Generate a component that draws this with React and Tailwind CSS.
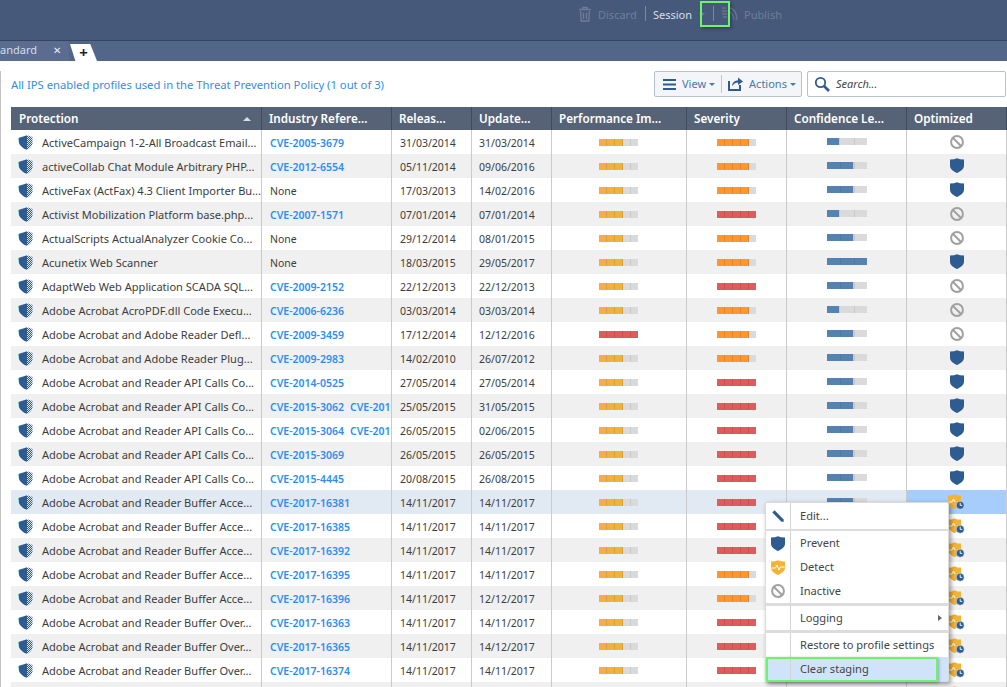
import React from "react";

const rows = [
  ["ActiveCampaign 1-2-All Broadcast Email...", ["CVE-2005-3679"], "31/03/2014", "31/03/2014", 3, 4, 1, "block"],
  ["activeCollab Chat Module Arbitrary PHP...", ["CVE-2012-6554"], "05/11/2014", "09/06/2016", 3, 4, 2, "shield"],
  ["ActiveFax (ActFax) 4.3 Client Importer Bu...", [], "17/03/2013", "14/02/2016", 3, 4, 2, "shield"],
  ["Activist Mobilization Platform base.php...", ["CVE-2007-1571"], "07/01/2014", "07/01/2014", 3, 5, 1, "block"],
  ["ActualScripts ActualAnalyzer Cookie Co...", [], "29/12/2014", "08/01/2015", 3, 4, 2, "block"],
  ["Acunetix Web Scanner", [], "18/03/2015", "29/05/2017", 3, 4, 3, "shield"],
  ["AdaptWeb Web Application SCADA SQL...", ["CVE-2009-2152"], "22/12/2013", "22/12/2013", 3, 5, 2, "block"],
  ["Adobe Acrobat AcroPDF.dll Code Execu...", ["CVE-2006-6236"], "03/03/2014", "03/03/2014", 3, 4, 1, "block"],
  ["Adobe Acrobat and Adobe Reader Defl...", ["CVE-2009-3459"], "17/12/2014", "12/12/2016", 5, 4, 2, "block"],
  ["Adobe Acrobat and Adobe Reader Plug...", ["CVE-2009-2983"], "14/02/2010", "26/07/2012", 3, 4, 2, "shield"],
  ["Adobe Acrobat and Reader API Calls Co...", ["CVE-2014-0525"], "27/05/2014", "27/05/2014", 3, 5, 2, "shield"],
  ["Adobe Acrobat and Reader API Calls Co...", ["CVE-2015-3062", "CVE-2015-3063"], "25/05/2015", "31/05/2015", 3, 5, 2, "shield"],
  ["Adobe Acrobat and Reader API Calls Co...", ["CVE-2015-3064", "CVE-2015-3065"], "26/05/2015", "02/06/2015", 3, 5, 2, "shield"],
  ["Adobe Acrobat and Reader API Calls Co...", ["CVE-2015-3069"], "26/05/2015", "26/05/2015", 3, 5, 2, "shield"],
  ["Adobe Acrobat and Reader API Calls Co...", ["CVE-2015-4445"], "20/08/2015", "26/08/2015", 3, 5, 2, "shield"],
  ["Adobe Acrobat and Reader Buffer Acce...", ["CVE-2017-16381"], "14/11/2017", "14/11/2017", 3, 5, 2, "detect"],
  ["Adobe Acrobat and Reader Buffer Acce...", ["CVE-2017-16385"], "14/11/2017", "14/11/2017", 3, 5, 2, "detect"],
  ["Adobe Acrobat and Reader Buffer Acce...", ["CVE-2017-16392"], "14/11/2017", "14/11/2017", 3, 5, 2, "detect"],
  ["Adobe Acrobat and Reader Buffer Acce...", ["CVE-2017-16395"], "14/11/2017", "14/11/2017", 3, 4, 2, "detect"],
  ["Adobe Acrobat and Reader Buffer Acce...", ["CVE-2017-16396"], "14/11/2017", "12/12/2017", 3, 4, 2, "detect"],
  ["Adobe Acrobat and Reader Buffer Over...", ["CVE-2017-16363"], "14/11/2017", "14/11/2017", 3, 5, 2, "detect"],
  ["Adobe Acrobat and Reader Buffer Over...", ["CVE-2017-16365"], "14/11/2017", "14/12/2017", 3, 5, 2, "detect"],
  ["Adobe Acrobat and Reader Buffer Over...", ["CVE-2017-16374"], "14/11/2017", "14/11/2017", 3, 5, 2, "detect"],
  ["Adobe Acrobat and Reader Buffer Over...", ["CVE-2017-16375"], "14/11/2017", "14/11/2017", 3, 5, 2, "detect"],
];

const GRID = "grid grid-cols-[251px_130px_80px_80px_135px_100px_120px_100px]";
const SHIELD = "M7 0.2 L10 1.2 L14 1.6 L14 8 C14 11 10 13.8 7 15 C4 13.8 0 11 0 8 L0 1.6 L4 1.2 Z";

function ProtIcon() {
  return (
    <svg width="15" height="15" viewBox="0 0 15 15" className="shrink-0">
      <defs>
        <pattern id="dith" width="2" height="2" patternUnits="userSpaceOnUse">
          <rect width="1" height="1" fill="#2f5c90" />
          <rect x="1" y="1" width="1" height="1" fill="#2f5c90" />
          <rect x="1" width="1" height="1" fill="#dce5ef" />
          <rect y="1" width="1" height="1" fill="#dce5ef" />
        </pattern>
      </defs>
      <path d="M0.5 3 L9 0.3 L9 14.8 C5 14 1.5 10 1 8 Z" fill="#2f5c90" />
      <path d="M9 0.3 L14.5 2 L14.5 8 C14.5 10.5 12 13.5 9 14.8 Z" fill="url(#dith)" />
    </svg>
  );
}

function ShieldIcon() {
  return (
    <svg width="14" height="15" viewBox="0 0 14 15">
      <path d={SHIELD} fill="#2f5c90" />
    </svg>
  );
}

function BlockIcon() {
  return (
    <svg width="14" height="14" viewBox="0 0 14 14">
      <circle cx="7" cy="7" r="5.9" fill="none" stroke="#a0a0a0" strokeWidth="2" />
      <path d="M3 3 L11 11" stroke="#a0a0a0" strokeWidth="2" />
    </svg>
  );
}

function DetectShield() {
  return (
    <svg width="14" height="15" viewBox="0 0 14 15">
      <path d={SHIELD} fill="#f4b333" />
      <path d="M0.5 8 L4.5 8 L6 5 L8 10 L9.5 7 L13.5 7" fill="none" stroke="#ffffff" strokeWidth="1" />
    </svg>
  );
}

function DetectClock() {
  return (
    <svg width="17" height="16" viewBox="0 0 17 16">
      <path d="M6.5 0.3 L9.5 1.4 L13 1.6 L13 8 C13 11 9.5 13.6 6.5 15 C3.5 13.6 0 11 0 8 L0 1.6 L3.5 1.4 Z" fill="#f4b333" />
      <path d="M0.5 8 L4 8 L5.5 5 L7 8" fill="none" stroke="#ffffff" strokeWidth="1" />
      <circle cx="12.2" cy="11.2" r="4" fill="#2f5c90" stroke="#ffffff" strokeWidth="0.5" />
      <path d="M12.2 8.8 L12.2 11.4 L14.2 11.4" fill="none" stroke="#ffffff" strokeWidth="0.9" />
    </svg>
  );
}

const LEVEL_FILL = {
  3: "bg-[#f0b13e] border-[#dfa02f]",
  4: "bg-[#fd962e] border-[#e8842a]",
  5: "bg-[#e05c5c] border-[#c95050]",
};

function FiveBar({ level }) {
  const fill = LEVEL_FILL[level];
  return (
    <div className="flex h-[7px] w-[39px]">
      {[0, 1, 2, 3, 4].map((i) => (
        <div
          key={i}
          className={
            (i === 4 ? "w-[7px] " : "w-[8px] border-r ") +
            (i < level ? fill : "bg-[#dadada] border-[#c8c8c8]")
          }
        />
      ))}
    </div>
  );
}

function ConfBar({ level }) {
  return (
    <div className="relative -mt-[2px] flex h-[7px] w-[40px] bg-[#dadada]">
      {level === 1 && <div className="h-full w-[13px] border-r border-[#c4ccd6] bg-[#5682b3]" />}
      {level === 2 && <div className="h-full w-[27px] border-r border-[#c4ccd6] bg-[#5682b3]" />}
      {level === 3 && <div className="h-full w-[40px] bg-[#5682b3]" />}
      <div className={"absolute left-[13px] top-0 h-full w-px " + (level >= 2 ? "bg-[#4e79a8]" : "bg-[#dadada]")} />
      <div className={"absolute left-[27px] top-0 h-full w-px " + (level >= 3 ? "bg-[#4e79a8]" : "bg-[#c8c8c8]")} />
    </div>
  );
}

function Cell({ className = "", children }) {
  return (
    <div className={"flex h-full items-center overflow-hidden whitespace-nowrap border-r border-[#cacaca] " + className}>
      {children}
    </div>
  );
}

function Head({ children, className = "" }) {
  return (
    <div className={"flex h-full items-center border-r border-[#3f4b5f] pl-[7px] pt-[1px] text-[11.7px] font-semibold text-white " + className}>
      {children}
    </div>
  );
}

function Row({ r, i }) {
  const [name, refs, rel, upd, perf, sev, conf, opt] = r;
  const selected = i === 15;
  const bg = selected ? "bg-[#e1e9f3]" : i % 2 === 1 ? "bg-[#f0f0f0]" : "bg-white";
  return (
    <div className={GRID + " h-[24px] text-[#3c3c3c] " + bg}>
      <Cell className="gap-[9px] pl-[7px]">
        <ProtIcon />
        <span className="pt-[2px] text-[11.05px]">{name}</span>
      </Cell>
      <Cell className="pl-[8px] pt-[3px] text-[10.5px]">
        {refs.length === 0 && <span>None</span>}
        {refs.map((c) => (
          <span key={c} className="mr-[6px] font-semibold text-[#2f8df0]">{c}</span>
        ))}
      </Cell>
      <Cell className="pl-[8px] pt-[3px] text-[10.5px]">{rel}</Cell>
      <Cell className="pl-[7px] pt-[3px] text-[10.5px]">{upd}</Cell>
      <Cell className="justify-center pr-[1px]"><FiveBar level={perf} /></Cell>
      <Cell className="justify-center"><FiveBar level={sev} /></Cell>
      <Cell className="justify-center"><ConfBar level={conf} /></Cell>
      <Cell className={"justify-center " + (selected ? "bg-[#a6cdfb]" : "")}>
        <div className="-mt-[1px]">
          {opt === "block" && <BlockIcon />}
          {opt === "shield" && <ShieldIcon />}
          {opt === "detect" && <DetectClock />}
        </div>
      </Cell>
    </div>
  );
}

function MenuItem({ icon, children, arrow, className = "" }) {
  return (
    <div className={"flex h-[24px] items-center " + className}>
      <div className="flex h-full w-[25px] shrink-0 items-center justify-center border-r border-[#d4d4d4]">{icon}</div>
      <span className="flex-1 pl-[9px] pt-[1px]">{children}</span>
      {arrow && <span className="mr-[6px] h-0 w-0 border-y-[3px] border-l-[4px] border-y-transparent border-l-[#666]" />}
    </div>
  );
}

function Sep({ className = "" }) {
  return <div className={"bg-[#dcdcdc] " + className} />;
}

function Caret({ className = "" }) {
  return <span className={"inline-block h-0 w-0 border-x-[3px] border-t-[3px] border-x-transparent " + className} />;
}

export default function App() {
  return (
    <div className="relative h-[687px] w-[1007px] overflow-hidden bg-white text-[11.1px] font-['Noto_Sans','Open_Sans',sans-serif]">
      {/* Top bar */}
      <div className="flex h-[41px] items-start border-b border-[#35465f] bg-[#46597a] pl-[578px] pt-[6px]">
        <svg width="14" height="16" viewBox="0 0 14 16" className="mr-[6px]" fill="none" stroke="#6c7d9a" strokeWidth="1.4">
          <path d="M1 3.5 H13 M5 3 V1.5 H9 V3 M2.5 5 L3.2 15 H10.8 L11.5 5 M5.5 6.5 V13 M8.5 6.5 V13" />
        </svg>
        <span className="w-[47px] text-[11px] leading-[18px] text-[#6d7e9c]">Discard</span>
        <span className="h-[15px] w-px bg-[#7a8aa5]" />
        <span className="ml-[7px] w-[46px] text-[11px] leading-[18px] text-[#d8dfea]">Session</span>
        <Caret className="mt-[7px] border-t-[#6d7e9c]" />
        <span className="ml-[8px] h-[15px] w-px bg-[#7a8aa5]" />
        <svg width="17" height="18" viewBox="0 0 17 18" className="ml-[7px]" fill="none" stroke="#65768f" strokeWidth="1.3">
          <path d="M1 2 H5 M1 5 H6 M1 8 H6 M2 11 H6 M9 2 C13 3 16 7 16 14 M7 5 C10 6 12.5 9 13 14" />
        </svg>
        <span className="ml-[6px] text-[11px] leading-[18px] text-[#6d7e9c]">Publish</span>
      </div>

      {/* Tabs */}
      <div className="flex h-[20px] items-end overflow-hidden bg-[#52668a]">
        <div className="flex h-[20px] w-[69px] items-center justify-between rounded-tr-[4px] bg-[#5a6d90] pr-[8px] text-[11px] text-[#d5dce8]">
          <span className="-mt-[1px]">andard</span>
          <span className="-mt-[3px] text-[10px] leading-none text-[#e8ecf2]">✕</span>
        </div>
        <div className="ml-[1px] flex h-[17px] w-[27px] items-center justify-center bg-white text-[15px] font-bold leading-none text-[#222] [clip-path:polygon(0_0,75%_0,100%_100%,20%_100%)]">
          +
        </div>
      </div>

      {/* Content */}
      <div className="mt-[10px] border-l border-[#c4c4c4] pl-[10px]">
        <div className="flex h-[26px] items-center justify-between">
          <span className="pt-[2px] text-[11.25px] text-[#2f8df0]">All IPS enabled profiles used in the Threat Prevention Policy (1 out of 3)</span>
          <div className="flex items-center gap-[5px]">
            <div className="flex h-[26px] w-[148px] items-center rounded-[2px] border border-[#b8c2ce] bg-[#f3f5f8] pl-[8px] text-[11px] text-[#4a78a8]">
              <svg width="13" height="11" viewBox="0 0 13 11" fill="#2f5c90">
                <rect y="0" width="13" height="2" />
                <rect y="4.5" width="13" height="2" />
                <rect y="9" width="13" height="2" />
              </svg>
              <span className="ml-[6px]">View</span>
              <Caret className="ml-[3px] border-t-[#4a78a8]" />
              <span className="ml-[6px] h-[18px] w-px bg-[#bcc5d0]" />
              <svg width="15" height="14" viewBox="0 0 15 14" className="ml-[6px]" fill="none">
                <path d="M1 4 V13 H12 V8" stroke="#2f5c90" strokeWidth="2" />
                <path d="M4 9 C4.5 5 7 3.5 10 3.5 V0.5 L15 4.5 L10 8 V5.5 C8 5.5 6 6.5 4 9 Z" fill="#2f5c90" />
              </svg>
              <span className="ml-[6px]">Actions</span>
              <Caret className="ml-[3px] border-t-[#4a78a8]" />
            </div>
            <div className="mr-[1px] flex h-[26px] w-[199px] items-center rounded-[2px] border border-[#b8c2ce] bg-white pl-[6px] text-[11px] italic text-[#444]">
              <svg width="16" height="16" viewBox="0 0 16 16" fill="none" stroke="#2f5c90">
                <circle cx="6.5" cy="6.5" r="4.7" strokeWidth="1.8" />
                <path d="M10 10 L15 15" strokeWidth="2.6" />
              </svg>
              <span className="ml-[6px]">Search...</span>
            </div>
          </div>
        </div>

        {/* Table */}
        <div className="mt-[10px]">
          <div className={GRID + " h-[23px] bg-[#566377]"}>
            <Head className="justify-between pl-[8px] pr-[10px]">
              <span>Protection</span>
              <span className="h-0 w-0 border-x-[4px] border-b-[4px] border-x-transparent border-b-[#d8dde4]" />
            </Head>
            <Head>Industry Refere...</Head>
            <Head>Releas...</Head>
            <Head>Update...</Head>
            <Head>Performance Im...</Head>
            <Head>Severity</Head>
            <Head>Confidence Le...</Head>
            <Head>Optimized</Head>
          </div>
          {rows.map((r, i) => (
            <Row key={i} r={r} i={i} />
          ))}
        </div>
      </div>

      {/* Context menu */}
      <div className="absolute left-[765px] top-[502px] w-[184px] rounded-[2px] border border-[#dcdcdc] bg-white text-[#444] shadow-[2px_2px_5px_rgba(0,0,0,0.4)]">
        <MenuItem
          className="h-[26px]"
          icon={
            <svg width="12" height="12" viewBox="0 0 12 12">
              <path d="M2.5 0.3 L11.7 9.5 L11.7 11.7 L9.5 11.7 L0.3 2.5 Z" fill="#2f5c90" />
            </svg>
          }
        >
          Edit...
        </MenuItem>
        <Sep className="h-[2px]" />
        <MenuItem icon={<ShieldIcon />}>Prevent</MenuItem>
        <MenuItem icon={<DetectShield />}>Detect</MenuItem>
        <MenuItem icon={<BlockIcon />}>Inactive</MenuItem>
        <Sep className="h-[3px]" />
        <MenuItem arrow>Logging</MenuItem>
        <Sep className="h-[3px]" />
        <MenuItem>Restore to profile settings</MenuItem>
        <MenuItem className="bg-[#cfe4fb]">Clear staging</MenuItem>
      </div>

      {/* Green annotations */}
      <div className="absolute left-[700px] top-[1px] h-[26px] w-[30px] border-2 border-[#6bf56b] shadow-[2px_2px_3px_rgba(0,0,0,0.25)]" />
      <div className="absolute left-[766px] top-[657px] h-[25px] w-[172px] border-2 border-[#6bf56b] shadow-[1px_1px_3px_rgba(0,0,0,0.3)]" />
    </div>
  );
}
